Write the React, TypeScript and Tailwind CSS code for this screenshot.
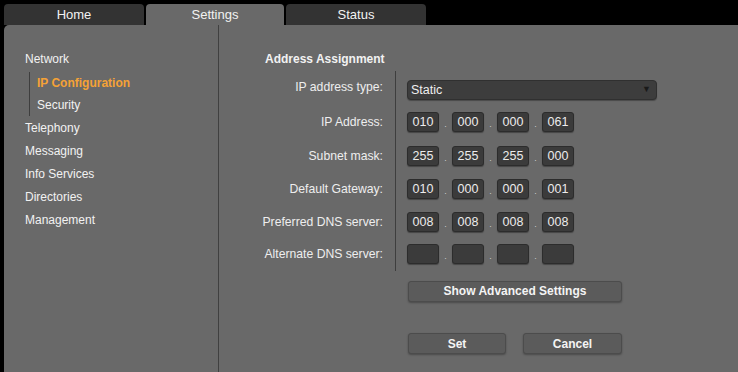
import React from "react";

const navItems = ["Telephony", "Messaging", "Info Services", "Directories", "Management"];

const rows: { label: string; h: string; values?: string[] }[] = [
  { label: "IP Address:", h: "h-[38px]", values: ["010", "000", "000", "061"] },
  { label: "Subnet mask:", h: "h-[30px]", values: ["255", "255", "255", "000"] },
  { label: "Default Gateway:", h: "h-[36px]", values: ["010", "000", "000", "001"] },
  { label: "Preferred DNS server:", h: "h-[30px]", values: ["008", "008", "008", "008"] },
  { label: "Alternate DNS server:", h: "h-[34px]", values: ["", "", "", ""] },
];

const Tab = ({ label, w, active }: { label: string; w: string; active?: boolean }) => (
  <div
    className={`${w} h-[21px] rounded-t-[4px] flex items-center justify-center text-[13px] text-[#f2f2f2] ${
      active ? "bg-[#696969]" : "bg-[#333333]"
    }`}
  >
    {label}
  </div>
);

const OctetBox = ({ value }: { value: string }) => (
  <div className="w-[32px] h-[20px] rounded-[3px] bg-[#3b3b3b] border border-[#2c2c2c] shadow-[0_1px_1px_rgba(0,0,0,0.35)] flex items-center justify-center text-[12.5px] text-[#ececec]">
    {value}
  </div>
);

const IpField = ({ values }: { values: string[] }) => (
  <div className="flex items-center">
    {values.map((v, i) => (
      <React.Fragment key={i}>
        {i > 0 && (
          <span className="w-[13px] text-center text-[9px] text-[#cfcfcf] pt-[6px]">.</span>
        )}
        <OctetBox value={v} />
      </React.Fragment>
    ))}
  </div>
);

const GreyButton = ({ label, w }: { label: string; w: string }) => (
  <button
    className={`${w} h-[21px] rounded-[3px] bg-[#5b5b5b] border border-[#4c4c4c] shadow-[0_1px_2px_rgba(0,0,0,0.3)] text-[12px] font-bold text-[#f4f4f4]`}
  >
    {label}
  </button>
);

function Row({ label, h, children }: { label: string; h: string; children: React.ReactNode }) {
  return (
    <div className={`flex ${h}`}>
      <div className="w-[118px] flex items-center justify-end text-[12.2px] text-[#eeeeee] whitespace-nowrap">
        {label}
      </div>
      <div className="ml-[12px] border-l border-[#3e3e3e] pl-[11px] flex items-center">
        {children}
      </div>
    </div>
  );
}

export default function App() {
  return (
    <div
      className="w-[738px] h-[372px] bg-black pt-[4px] pl-[4px] flex flex-col overflow-hidden"
      style={{ fontFamily: '"Liberation Sans", Arial, sans-serif' }}
    >
      <div className="flex gap-[2px]">
        <Tab label="Home" w="w-[140px]" />
        <Tab label="Settings" w="w-[138px]" active />
        <Tab label="Status" w="w-[140px]" />
      </div>

      <div className="flex-1 bg-[#696969] rounded-tl-[5px] flex">
        {/* sidebar */}
        <div className="w-[215px] border-r border-[#404040] pt-[23px] pl-[21px] text-[12px] text-[#f2f2f2] leading-[23px]">
          <div>Network</div>
          <div className="ml-[4px] my-[1px] border-l border-[#3e3e3e] pl-[7px] leading-[22px]">
            <div className="font-bold text-[#f5a236]">IP Configuration</div>
            <div>Security</div>
          </div>
          {navItems.map((item) => (
            <div key={item}>{item}</div>
          ))}
        </div>

        {/* content */}
        <div className="flex-1 pl-[46px] pt-[27px]">
          <div className="text-[12px] font-bold text-[#f2f2f2] leading-[14px]">Address Assignment</div>

          <div className="mt-[5px]">
            <Row label="IP address type:" h="h-[32px]">
              <div className="mt-[6px] w-[250px] h-[20px] rounded-[4px] bg-[#3d3d3d] border border-[#303030] shadow-[0_1px_1px_rgba(0,0,0,0.3)] flex items-center justify-between pl-[3px] pr-[5px] text-[12.5px] text-[#efefef]">
                <span>Static</span>
                <span className="text-[9px] text-[#1a1a1a]">▼</span>
              </div>
            </Row>
            {rows.map((r) => (
              <Row key={r.label} label={r.label} h={r.h}>
                <IpField values={r.values!} />
              </Row>
            ))}
          </div>

          <div className="ml-[143px] mt-[7px]">
            <GreyButton label="Show Advanced Settings" w="w-[214px]" />
          </div>

          <div className="ml-[143px] mt-[31px] flex gap-[17px]">
            <GreyButton label="Set" w="w-[98px]" />
            <GreyButton label="Cancel" w="w-[99px]" />
          </div>
        </div>
      </div>
    </div>
  );
}
